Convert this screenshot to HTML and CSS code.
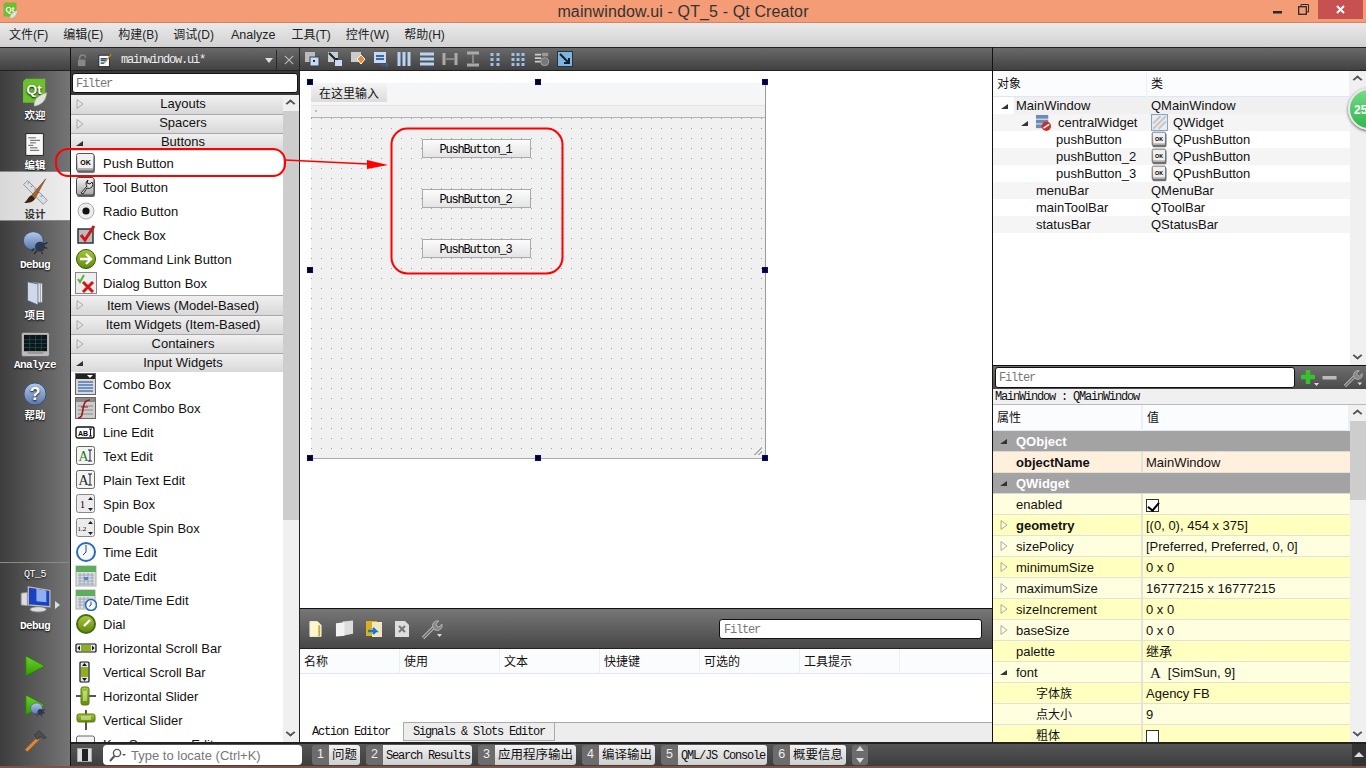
FILE: index.html
```html
<!DOCTYPE html>
<html lang="zh-CN">
<head>
  <meta charset="UTF-8" />
  <title>mainwindow.ui - QT_5 - Qt Creator</title>
  <link rel="stylesheet" href="styles.css">
</head>
<body>
  <!-- shared icons -->
  <svg class="defs" aria-hidden="true">
    <defs>
      <linearGradient id="gBtn" x1="0" y1="0" x2="0" y2="1"><stop offset="0" stop-color="#f4f4f4"/><stop offset="1" stop-color="#a8a8a8"/></linearGradient>
      <linearGradient id="gGreen" x1="0" y1="0" x2="0" y2="1"><stop offset="0" stop-color="#a4c93a"/><stop offset="1" stop-color="#5f8a0c"/></linearGradient>
      <linearGradient id="gBlue" x1="0" y1="0" x2="0" y2="1"><stop offset="0" stop-color="#b4c8e8"/><stop offset="1" stop-color="#5a78ac"/></linearGradient>
      <linearGradient id="gPlay" x1="0" y1="0" x2="0" y2="1"><stop offset="0" stop-color="#6fd02a"/><stop offset="1" stop-color="#2f9a08"/></linearGradient>

      <!-- widget box -->
      <symbol id="i-ok" viewBox="0 0 22 22"><rect x="2" y="3" width="18" height="18" rx="2" fill="#777"/><rect x="1.500" y="1.500" width="17.500" height="17.500" rx="2" fill="url(#gBtn)" stroke="#555"/><rect x="3" y="3" width="15" height="13" rx="1" fill="#f0f0f0"/><text x="10.500" y="12.500" font-size="7" font-weight="700" text-anchor="middle" font-family="Liberation Sans">OK</text></symbol>
      <symbol id="i-tool" viewBox="0 0 22 22"><rect x="2" y="3" width="18" height="18" rx="2" fill="#666"/><rect x="1.500" y="1.500" width="17.500" height="17.500" rx="2" fill="url(#gBtn)" stroke="#444"/><path d="M6 17l6-7a4 4 0 0 1 1-6l-1 3 3 1 2-2a4 4 0 0 1-5 6l-4 6z" fill="#ddd" stroke="#222"/></symbol>
      <symbol id="i-radio" viewBox="0 0 22 22"><circle cx="11" cy="11" r="8" fill="#ececec" stroke="#aaa"/><circle cx="11" cy="11" r="3.600" fill="#111"/></symbol>
      <symbol id="i-check" viewBox="0 0 22 22"><rect x="3" y="5" width="15" height="14" fill="#bbb" stroke="#333" stroke-width="1.500"/><path d="M6 11l4 5 9-14" fill="none" stroke="#d4121c" stroke-width="3"/></symbol>
      <symbol id="i-link" viewBox="0 0 22 22"><circle cx="11" cy="11" r="9.500" fill="url(#gGreen)" stroke="#3c5200"/><path d="M5 11h10M11 6l5 5-5 5" fill="none" stroke="#fff" stroke-width="2.400"/></symbol>
      <symbol id="i-dialog" viewBox="0 0 22 22"><rect x=".5" y=".5" width="21" height="21" fill="#eee" stroke="#888"/><path d="M3 7l2 3 4-7" fill="none" stroke="#57b43a" stroke-width="2"/><path d="M8 10l10 10M18 10L8 20" stroke="#d01818" stroke-width="3"/></symbol>
      <symbol id="i-combo" viewBox="0 0 22 22"><rect x=".5" y=".5" width="20" height="21" fill="#d8d8d8" stroke="#666"/><rect x="1" y="1" width="19" height="5" fill="#222"/><path d="M12 2h6l-3 3z" fill="#fff"/><path d="M3 9h15M3 12h15M3 15h15M3 18h15" stroke="#6f8fc0" stroke-width="2"/></symbol>
      <symbol id="i-fontcombo" viewBox="0 0 22 22"><rect x=".5" y=".5" width="20" height="21" fill="#ccc" stroke="#666"/><rect x="1" y="1" width="19" height="4" fill="#888"/><path d="M3 9h15M3 13h15M3 17h15" stroke="#aaa" stroke-width="2"/><path d="M3 21c4 0 4-3 5-9s2-9 7-9" fill="none" stroke="#a01818" stroke-width="1.600"/><path d="M6 10h7" stroke="#a01818"/></symbol>
      <symbol id="i-line" viewBox="0 0 22 22"><rect x="1" y="6" width="18" height="11" rx="2" fill="#fff" stroke="#111" stroke-width="1.400"/><text x="3" y="14.500" font-size="7" font-weight="700" font-family="Liberation Sans">AB</text><path d="M15.500 8v7M14 8h3M14 15h3" stroke="#111"/></symbol>
      <symbol id="i-text" viewBox="0 0 22 22"><rect x="1.500" y="1.500" width="18" height="18" rx="2" fill="#f4f4f4" stroke="#666"/><text x="3.500" y="15.500" font-size="14" fill="#1c7a1c" font-family="Liberation Serif">A</text><path d="M15 5v11M13 5h4M13 16h4" stroke="#222"/></symbol>
      <symbol id="i-plain" viewBox="0 0 22 22"><rect x="1.500" y="1.500" width="18" height="18" rx="2" fill="#f4f4f4" stroke="#666"/><text x="3.500" y="15.500" font-size="14" fill="#222" font-family="Liberation Serif">A</text><path d="M15 5v11M13 5h4M13 16h4" stroke="#222"/></symbol>
      <symbol id="i-spin" viewBox="0 0 22 22"><rect x="1.500" y="1.500" width="18" height="18" rx="2" fill="#ececec" stroke="#888"/><text x="5" y="15" font-size="10" font-family="Liberation Serif">1</text><path d="M13 7l2.500-3L18 7zM13 15l2.500 3 2.500-3z" fill="#222"/></symbol>
      <symbol id="i-dspin" viewBox="0 0 22 22"><rect x="1.500" y="1.500" width="18" height="18" rx="2" fill="#ececec" stroke="#888"/><text x="2.500" y="14" font-size="7" font-family="Liberation Serif">1.2</text><path d="M13 7l2.500-3L18 7zM13 15l2.500 3 2.500-3z" fill="#222"/></symbol>
      <symbol id="i-clock" viewBox="0 0 22 22"><circle cx="11" cy="11" r="9" fill="#f4f8fc" stroke="#2a6db4" stroke-width="2"/><path d="M11 4v7l-3 3" fill="none" stroke="#444"/></symbol>
      <symbol id="i-date" viewBox="0 0 22 22"><rect x="1" y="1" width="20" height="20" fill="#ddd" stroke="#aaa"/><rect x="1" y="1" width="20" height="6" fill="#5cae5c"/><path d="M3 10h16M3 13h16M3 16h16M3 19h16M5 8v12M9 8v12M13 8v12M17 8v12" stroke="#9aa8c0"/><rect x="9" y="12" width="4" height="3" fill="#5a80d0"/></symbol>
      <symbol id="i-datetime" viewBox="0 0 22 22"><rect x="1" y="1" width="19" height="19" fill="#ddd" stroke="#aaa"/><rect x="1" y="1" width="19" height="6" fill="#5cae5c"/><path d="M3 10h15M3 13h15M3 16h15M5 8v11M9 8v11M13 8v11" stroke="#9aa8c0"/><circle cx="16" cy="16" r="5.500" fill="#f4f8fc" stroke="#2a6db4" stroke-width="1.600"/><path d="M16 12.500V16l-2 1.500" fill="none" stroke="#444"/></symbol>
      <symbol id="i-dial" viewBox="0 0 22 22"><circle cx="11" cy="11" r="10" fill="#4e6812"/><circle cx="11" cy="11" r="8" fill="url(#gGreen)"/><path d="M9 13l6-6" stroke="#fff" stroke-width="2.400"/></symbol>
      <symbol id="i-hscroll" viewBox="0 0 22 22"><rect x="1" y="7" width="20" height="8" rx="1" fill="#e8e8e8" stroke="#111" stroke-width="1.200"/><rect x="6" y="8" width="10" height="6" fill="#8bb01c"/><path d="M2.500 11L5 8.500v5zM19.500 11L17 8.500v5z" fill="#111"/></symbol>
      <symbol id="i-vscroll" viewBox="0 0 22 22"><rect x="5" y="1" width="9" height="20" rx="1" fill="#e8e8e8" stroke="#111" stroke-width="1.200"/><rect x="6" y="6" width="7" height="10" fill="#8bb01c"/><path d="M9.500 2L7 5h5zM9.500 20L7 17h5z" fill="#111"/></symbol>
      <symbol id="i-hslider" viewBox="0 0 22 22"><path d="M1 11h20" stroke="#555" stroke-width="2"/><rect x="6" y="2" width="8" height="18" rx="2" fill="url(#gGreen)" stroke="#5a7a10"/><path d="M9 6v10M11 6v10" stroke="#eef6c0"/></symbol>
      <symbol id="i-vslider" viewBox="0 0 22 22"><path d="M11 1v20" stroke="#555" stroke-width="2"/><rect x="2" y="5" width="18" height="8" rx="2" fill="url(#gGreen)" stroke="#5a7a10"/><path d="M6 8h10M6 10h10" stroke="#eef6c0"/></symbol>
      <symbol id="i-key" viewBox="0 0 22 22"><rect x="1.500" y="3" width="18" height="16" rx="2" fill="#f4f4f4" stroke="#666"/></symbol>

      <!-- mode bar -->
      <symbol id="m-qt" viewBox="0 0 30 34"><path d="M4 1h23v24l-4 4H1V4z" fill="#6cc02c"/><text x="14" y="19" font-size="16" font-weight="700" fill="#fff" text-anchor="middle" font-family="Liberation Sans">Qt</text><path d="M14 33c-1-8 5-13 15-16-1 9-6 15-15 16z" fill="#dfe4dc" stroke="#8a948a" stroke-width=".6"/></symbol>
      <symbol id="m-edit" viewBox="0 0 24 28"><rect x="1" y="1" width="21" height="26" fill="#f8f8f8" stroke="#111"/><path d="M4 6h9M6 9h12M6 12h7M4 15h6M6 18h9M6 21h11" stroke="#444"/></symbol>
      <symbol id="m-design" viewBox="0 0 34 34"><path d="M3 8l5-5 24 24-5 5z" fill="#d8dde0" stroke="#889"/><path d="M10 5l-2 2M14 9l-2 2M18 13l-2 2M22 17l-2 2M26 21l-2 2" stroke="#667"/><path d="M30 1L13 21l4 4z" fill="#a86428" stroke="#5a3210" stroke-width=".6"/><path d="M13 21c-4 1-4 5-9 9 5 1 12-1 13-5z" fill="#3a2410"/></symbol>
      <symbol id="m-bug" viewBox="0 0 32 30"><ellipse cx="14" cy="13" rx="12" ry="11" fill="url(#gBlue)" stroke="#344a70"/><ellipse cx="22" cy="20" rx="6" ry="6" fill="#2c3850"/><path d="M18 25l-3 4M24 26l1 3M27 21l4 1M27 17l4-2M15 22l-3 3" stroke="#222" stroke-width="1.300"/></symbol>
      <symbol id="m-project" viewBox="0 0 24 34"><path d="M10 3l12 1v26l-12-2z" fill="#e4e8f0" stroke="#666"/><path d="M7 3l12 1v26L7 28z" fill="#f2f4f8" stroke="#777"/><path d="M2 2l14 3v28L2 27z" fill="#d0d8ea" stroke="#4a5a80"/></symbol>
      <symbol id="m-analyze" viewBox="0 0 30 26"><rect x=".5" y=".5" width="29" height="25" rx="2" fill="#bbb" stroke="#666"/><rect x="3" y="3" width="24" height="17" fill="#101414"/><path d="M3 8h24M3 12h24M3 16h24M9 3v17M15 3v17M21 3v17" stroke="#1e5866" stroke-width=".7"/><path d="M5 20l3 3h14l3-3" fill="#999"/></symbol>
      <symbol id="m-help" viewBox="0 0 26 26"><circle cx="13" cy="13" r="12" fill="url(#gBlue)" stroke="#344a70"/><text x="13" y="20" font-size="19" fill="#fff" text-anchor="middle" font-family="Liberation Sans">?</text></symbol>
      <symbol id="m-monitor" viewBox="0 0 34 30"><path d="M1 8l7-1v15L1 21z" fill="#ddd" stroke="#888"/><path d="M9 1l24 4v18l-24-2z" fill="#1842c0" stroke="#bbb" stroke-width="1.400"/><path d="M18 3l11 2v13l-11-1z" fill="#8fb0f0"/><ellipse cx="20" cy="26" rx="9" ry="3" fill="#ddd" stroke="#888"/></symbol>
      <symbol id="m-play" viewBox="0 0 24 24"><path d="M2 1l21 11L2 23z" fill="url(#gPlay)" stroke="#2a7a08"/></symbol>
      <symbol id="m-hammer" viewBox="0 0 28 28"><path d="M1 25l15-15 3 3L4 28z" fill="#d88a3c" stroke="#7a4414" stroke-width=".6"/><path d="M13 7l5-5 9 8-2 2-5-3-4 4z" fill="#4c4c54" stroke="#222" stroke-width=".6"/></symbol>

      <!-- small tree and tool icons -->
      <symbol id="t-open" viewBox="0 0 10 12"><path d="M2 1.500L8 6 2 10.500z" fill="none" stroke="#aaa"/></symbol>
      <symbol id="t-down" viewBox="0 0 10 12"><path d="M1 9l7-5v5z" fill="#333"/></symbol>
      <symbol id="t-hatch" viewBox="0 0 16 16"><rect x=".5" y=".5" width="15" height="15" fill="#eee" stroke="#7ea4d0"/><path d="M2 9l7-7M2 14L14 2M7 14l7-7" stroke="#c8c8c8" stroke-width="2"/></symbol>
      <symbol id="t-central" viewBox="0 0 18 18"><rect x="1" y="1" width="13" height="4" fill="#6c8cb8"/><rect x="1" y="6" width="13" height="4" fill="#6c8cb8"/><rect x="1" y="11" width="7" height="4" fill="#6c8cb8"/><circle cx="12" cy="13" r="5" fill="#c83030"/><path d="M9 15l6-4" stroke="#fff" stroke-width="1.500"/></symbol>
      <symbol id="t-wrench" viewBox="0 0 22 22"><path d="M2 20L13 9" stroke="#bbb" stroke-width="3.400"/><path d="M2 20L13 9" stroke="#666" stroke-width="1.400"/><path d="M12 10a5 5 0 0 1 6-7l-3 3 1 2 2 1 3-3a5 5 0 0 1-7 6z" fill="#888" stroke="#bbb" stroke-width=".8"/><path d="M16 16h5l-2.500 3z" fill="#ddd"/></symbol>
      <symbol id="t-doc" viewBox="0 0 14 18"><path d="M1 1h8l4 4v12H1z" fill="#fdf6c8" stroke="#eee"/><path d="M11 5v12" stroke="#c8a840" stroke-width="2"/></symbol>
      <symbol id="t-docs" viewBox="0 0 20 18"><path d="M8 1l11-1v14l-11 2z" fill="#ddd"/><path d="M1 3l9-1v14l-9 1z" fill="#f2f2f2"/></symbol>
      <symbol id="t-paste" viewBox="0 0 18 20"><rect x="1" y="2" width="11" height="15" fill="#d8b020"/><rect x="7" y="3" width="10" height="15" fill="#f0e8c0"/><path d="M3 12h8l-3-3M11 12l-3 3" stroke="#1878d0" stroke-width="2.400" fill="none"/></symbol>
      <symbol id="t-del" viewBox="0 0 16 18"><path d="M1 1h10l4 4v12H1z" fill="#ddd"/><path d="M5 6l6 6M11 6l-6 6" stroke="#777" stroke-width="2"/></symbol>
    </defs>
  </svg>

  <div class="title-bar">
    <svg class="app-icon"><use href="#m-qt"/></svg>
    <span class="window-title">mainwindow.ui - QT_5 - Qt Creator</span>
    <div class="win-buttons">
      <svg class="win-min" viewBox="0 0 9 3"><rect width="9" height="2.500" fill="#2a2a2a"/></svg>
      <svg class="win-restore" viewBox="0 0 11 11"><path d="M3 2V.5h7.500V8H9" fill="none" stroke="#2a2a2a"/><rect x=".7" y="2.700" width="7.600" height="7.600" fill="none" stroke="#2a2a2a" stroke-width="1.300"/></svg>
      <div class="win-close"><svg viewBox="0 0 9 9"><path d="M1 1l7 7M8 1L1 8" stroke="#fff" stroke-width="2"/></svg></div>
    </div>
  </div>

  <nav class="menu-bar">
    <span>文件(F)</span><span>编辑(E)</span><span>构建(B)</span><span>调试(D)</span><span class="menu-latin">Analyze</span><span>工具(T)</span><span>控件(W)</span><span>帮助(H)</span>
  </nav>

  <div class="workspace">
    <!-- left mode bar -->
    <aside class="mode-bar">
      <div class="dark-strip"></div>
      <div class="mode"><svg class="m-qt"><use href="#m-qt"/></svg><span>欢迎</span></div>
      <div class="mode"><svg class="m-edit"><use href="#m-edit"/></svg><span>编辑</span></div>
      <div class="mode active"><svg class="m-design"><use href="#m-design"/></svg><span>设计</span></div>
      <div class="mode"><svg class="m-bug"><use href="#m-bug"/></svg><span class="latin">Debug</span></div>
      <div class="mode"><svg class="m-project"><use href="#m-project"/></svg><span>项目</span></div>
      <div class="mode"><svg class="m-analyze"><use href="#m-analyze"/></svg><span class="latin">Analyze</span></div>
      <div class="mode"><svg class="m-help"><use href="#m-help"/></svg><span>帮助</span></div>
      <div class="mode-spacer"></div>
      <div class="kit">
        <small>QT_5</small>
        <svg class="m-monitor"><use href="#m-monitor"/></svg>
        <b class="kit-arrow"></b>
        <span class="latin">Debug</span>
      </div>
      <svg class="run"><use href="#m-play"/></svg>
      <div class="run-debug"><svg class="run"><use href="#m-play"/></svg><svg class="run-bug"><use href="#m-bug"/></svg></div>
      <svg class="hammer"><use href="#m-hammer"/></svg>
    </aside>

    <div class="work-area">
      <div class="main">
        <!-- widget box -->
        <section class="left-col">
          <div class="dark-strip doc-head">
            <svg class="lock" viewBox="0 0 14 14"><path d="M3 6V4a3 3 0 0 1 6 0" fill="none" stroke="#888" stroke-width="1.500"/><rect x="1" y="6" width="8" height="7" fill="#888"/></svg>
            <svg class="doc-icon" viewBox="0 0 16 16"><rect x="1" y="2" width="12" height="13" fill="#fff" stroke="#222"/><path d="M3 6h7M3 8h7" stroke="#3050a0" stroke-width="1.500"/><path d="M3 11h4" stroke="#3a8a3a" stroke-width="2"/><path d="M7 11l8-10" stroke="#c09020" stroke-width="1.500"/></svg>
            <span class="doc-name">mainwindow.ui*</span>
            <b class="drop"></b>
            <i class="doc-sep"></i>
            <svg class="doc-close" viewBox="0 0 12 12"><path d="M1 1l10 10M11 1L1 11" stroke="#bbb" stroke-width="1.400"/></svg>
          </div>
          <div class="filter-row"><div class="filter">Filter</div></div>
          <div class="box-body">
            <div class="box-list">
              <div class="cat"><svg class="tri"><use href="#t-open"/></svg>Layouts</div>
              <div class="cat"><svg class="tri"><use href="#t-open"/></svg>Spacers</div>
              <div class="cat tight"><svg class="tri"><use href="#t-down"/></svg>Buttons</div>
              <div class="item"><svg><use href="#i-ok"/></svg>Push Button</div>
              <div class="item"><svg><use href="#i-tool"/></svg>Tool Button</div>
              <div class="item"><svg><use href="#i-radio"/></svg>Radio Button</div>
              <div class="item"><svg><use href="#i-check"/></svg>Check Box</div>
              <div class="item"><svg><use href="#i-link"/></svg>Command Link Button</div>
              <div class="item"><svg><use href="#i-dialog"/></svg>Dialog Button Box</div>
              <div class="cat loose"><svg class="tri"><use href="#t-open"/></svg>Item Views (Model-Based)</div>
              <div class="cat low"><svg class="tri"><use href="#t-open"/></svg>Item Widgets (Item-Based)</div>
              <div class="cat low"><svg class="tri"><use href="#t-open"/></svg>Containers</div>
              <div class="cat low"><svg class="tri"><use href="#t-down"/></svg>Input Widgets</div>
              <div class="item"><svg><use href="#i-combo"/></svg>Combo Box</div>
              <div class="item"><svg><use href="#i-fontcombo"/></svg>Font Combo Box</div>
              <div class="item"><svg><use href="#i-line"/></svg>Line Edit</div>
              <div class="item"><svg><use href="#i-text"/></svg>Text Edit</div>
              <div class="item"><svg><use href="#i-plain"/></svg>Plain Text Edit</div>
              <div class="item"><svg><use href="#i-spin"/></svg>Spin Box</div>
              <div class="item"><svg><use href="#i-dspin"/></svg>Double Spin Box</div>
              <div class="item"><svg><use href="#i-clock"/></svg>Time Edit</div>
              <div class="item"><svg><use href="#i-date"/></svg>Date Edit</div>
              <div class="item"><svg><use href="#i-datetime"/></svg>Date/Time Edit</div>
              <div class="item"><svg><use href="#i-dial"/></svg>Dial</div>
              <div class="item"><svg><use href="#i-hscroll"/></svg>Horizontal Scroll Bar</div>
              <div class="item"><svg><use href="#i-vscroll"/></svg>Vertical Scroll Bar</div>
              <div class="item"><svg><use href="#i-hslider"/></svg>Horizontal Slider</div>
              <div class="item"><svg><use href="#i-vslider"/></svg>Vertical Slider</div>
              <div class="item"><svg><use href="#i-key"/></svg>Key Sequence Edit</div>
            </div>
            <div class="scroll box-scroll"><em class="up"></em><div class="thumb"></div><em class="down"></em></div>
          </div>
        </section>

        <!-- form editor + action editor -->
        <section class="center-col">
          <div class="dark-strip form-tools">
            <svg viewBox="0 0 16 16"><rect x="1" y="1" width="10" height="10" fill="#bbb"/><rect x="6" y="6" width="9" height="9" fill="#c8daf4" stroke="#345"/><rect x="9" y="9" width="2" height="2" fill="#234"/></svg>
            <svg viewBox="0 0 16 16"><rect x="1" y="1" width="10" height="10" fill="#ccc"/><path d="M2 2l8 8M7 10h3V7" stroke="#123" stroke-width="2" fill="none"/><rect x="8" y="9" width="7" height="6" fill="#c8daf4"/></svg>
            <svg viewBox="0 0 16 16"><rect x="1" y="1" width="10" height="10" fill="#ccc"/><path d="M7 8l4-4 4 4-4 5z" fill="#f08a30" stroke="#fff"/></svg>
            <svg viewBox="0 0 16 16"><rect x="1" y="1" width="12" height="11" fill="#c8daf4"/><path d="M3 5h8M3 8h8" stroke="#3668b0" stroke-width="2"/><path d="M8 14h7M13 12l2 2-2 2" stroke="#3668b0" fill="none"/></svg>
            <svg viewBox="0 0 16 16"><path d="M3 1v14M8 1v14M13 1v14" stroke="#b8d4f4" stroke-width="3"/></svg>
            <svg viewBox="0 0 16 16"><path d="M1 3h14M1 8h14M1 13h14" stroke="#b8d4f4" stroke-width="3"/></svg>
            <svg viewBox="0 0 16 16"><path d="M2 2v12M14 2v12" stroke="#aaa" stroke-width="3"/><path d="M4 8h8" stroke="#888" stroke-width="2"/></svg>
            <svg viewBox="0 0 16 16"><path d="M2 2h12M2 14h12" stroke="#aaa" stroke-width="3"/><path d="M8 4v8" stroke="#888" stroke-width="2"/></svg>
            <svg viewBox="0 0 16 16"><path d="M4 2v3M10 2v3M4 7v3M10 7v3M4 12v3M10 12v3" stroke="#9cc0e8" stroke-width="3"/></svg>
            <svg viewBox="0 0 16 16"><path d="M2 2v3M7 2v3M12 2v3M2 7v3M7 7v3M12 7v3M2 12v3M7 12v3M12 12v3" stroke="#9cc0e8" stroke-width="3"/></svg>
            <svg viewBox="0 0 18 16"><path d="M1 3h7M1 7h7M1 11h7" stroke="#ccc" stroke-width="2"/><path d="M9 1h7v4H9z" fill="#999"/><circle cx="12" cy="11" r="4.500" fill="#777" stroke="#aaa"/></svg>
            <svg viewBox="0 0 16 16"><rect x=".5" y=".5" width="15" height="15" fill="#7fb4dc" stroke="#234"/><path d="M3 3l9 9M7 12h5V7" stroke="#123" stroke-width="2" fill="none"/></svg>
          </div>

          <div class="canvas">
            <div class="form">
              <div class="form-menu"><span class="type-here">在这里输入</span></div>
              <div class="form-toolbar"><i></i></div>
              <div class="form-body">
                <div class="push">PushButton_1</div>
                <div class="push">PushButton_2</div>
                <div class="push">PushButton_3</div>
              </div>
              <i class="grip"></i>
              <i class="handle h-tl"></i><i class="handle h-tm"></i><i class="handle h-tr"></i>
              <i class="handle h-ml"></i><i class="handle h-mr"></i>
              <i class="handle h-bl"></i><i class="handle h-bm"></i><i class="handle h-br"></i>
            </div>
          </div>

          <div class="action-editor">
            <div class="action-tools">
              <svg class="a-doc"><use href="#t-doc"/></svg>
              <svg class="a-docs"><use href="#t-docs"/></svg>
              <svg class="a-paste"><use href="#t-paste"/></svg>
              <svg class="a-del"><use href="#t-del"/></svg>
              <svg class="a-wrench"><use href="#t-wrench"/></svg>
              <div class="filter action-filter">Filter</div>
            </div>
            <div class="action-head">
              <span>名称</span><span>使用</span><span>文本</span><span>快捷键</span><span>可选的</span><span>工具提示</span>
            </div>
            <div class="action-table"></div>
            <div class="tabs">
              <span class="tab current">Action Editor</span>
              <span class="tab">Signals &amp; Slots Editor</span>
            </div>
          </div>
        </section>

        <!-- object + property inspector -->
        <section class="right-col">
          <div class="dark-strip"></div>
          <div class="object-panel">
            <div class="object-table">
              <div class="tree-head"><span>对象</span><span>类</span></div>
              <div class="obj first"><span class="lvl0"><svg class="tri"><use href="#t-down"/></svg>MainWindow</span><span>QMainWindow</span></div>
              <div class="obj alt"><span class="lvl1"><svg class="tri"><use href="#t-down"/></svg><svg class="ico"><use href="#t-central"/></svg>centralWidget</span><span class="cls"><svg class="ico"><use href="#t-hatch"/></svg>QWidget</span></div>
              <div class="obj"><span class="lvl2">pushButton</span><span class="cls"><svg class="ico"><use href="#i-ok"/></svg>QPushButton</span></div>
              <div class="obj alt"><span class="lvl2">pushButton_2</span><span class="cls"><svg class="ico"><use href="#i-ok"/></svg>QPushButton</span></div>
              <div class="obj"><span class="lvl2">pushButton_3</span><span class="cls"><svg class="ico"><use href="#i-ok"/></svg>QPushButton</span></div>
              <div class="obj alt"><span class="lvl1b">menuBar</span><span>QMenuBar</span></div>
              <div class="obj"><span class="lvl1b">mainToolBar</span><span>QToolBar</span></div>
              <div class="obj alt"><span class="lvl1b">statusBar</span><span>QStatusBar</span></div>
            </div>
            <div class="scroll obj-scroll"><em class="up"></em><em class="down"></em></div>
            <div class="ball">25</div>
          </div>

          <div class="prop-tools">
            <div class="filter prop-filter">Filter</div>
            <svg class="plus" viewBox="0 0 20 20"><path d="M1 9h14M8 2v14" stroke="#38c030" stroke-width="4.500"/><path d="M14 15h5l-2.500 3z" fill="#ddd"/></svg>
            <svg class="minus" viewBox="0 0 14 6"><rect y="1" width="14" height="3.500" fill="#bbb"/></svg>
            <svg class="prop-wrench"><use href="#t-wrench"/></svg>
          </div>
          <div class="prop-caption">MainWindow : QMainWindow</div>
          <div class="prop-panel">
            <div class="prop-table">
              <div class="prop-head"><span>属性</span><span>值</span></div>
              <div class="group"><svg class="tri"><use href="#t-down"/></svg>QObject</div>
              <div class="prop own"><span class="bold">objectName</span><span>MainWindow</span></div>
              <div class="group"><svg class="tri"><use href="#t-down"/></svg>QWidget</div>
              <div class="prop pale"><span>enabled</span><span><i class="box checked"></i></span></div>
              <div class="prop"><span class="bold"><svg class="tri"><use href="#t-open"/></svg>geometry</span><span>[(0, 0), 454 x 375]</span></div>
              <div class="prop pale"><span><svg class="tri"><use href="#t-open"/></svg>sizePolicy</span><span>[Preferred, Preferred, 0, 0]</span></div>
              <div class="prop"><span><svg class="tri"><use href="#t-open"/></svg>minimumSize</span><span>0 x 0</span></div>
              <div class="prop pale"><span><svg class="tri"><use href="#t-open"/></svg>maximumSize</span><span>16777215 x 16777215</span></div>
              <div class="prop"><span><svg class="tri"><use href="#t-open"/></svg>sizeIncrement</span><span>0 x 0</span></div>
              <div class="prop pale"><span><svg class="tri"><use href="#t-open"/></svg>baseSize</span><span>0 x 0</span></div>
              <div class="prop"><span>palette</span><span>继承</span></div>
              <div class="prop pale"><span><svg class="tri"><use href="#t-down"/></svg>font</span><span><b class="font-a">A</b>[SimSun, 9]</span></div>
              <div class="prop sub"><span>字体族</span><span>Agency FB</span></div>
              <div class="prop sub pale"><span>点大小</span><span>9</span></div>
              <div class="prop sub"><span>粗体</span><span><i class="box"></i></span></div>
            </div>
            <div class="scroll prop-scroll"><em class="up"></em><div class="thumb"></div><em class="down"></em></div>
          </div>
        </section>
      </div>

      <footer class="status-bar">
        <div class="side-toggle"><i></i></div>
        <div class="locator">
          <svg viewBox="0 0 18 14"><circle cx="9" cy="5" r="3.600" fill="none" stroke="#555" stroke-width="1.400"/><path d="M6.500 8L2 13" stroke="#555" stroke-width="2"/><path d="M14 6h4l-2 2z" fill="#555"/></svg>
          <span>Type to locate (Ctrl+K)</span>
        </div>
        <div class="pane"><b>1</b><span>问题</span></div>
        <div class="pane"><b>2</b><span class="mono">Search Results</span></div>
        <div class="pane"><b>3</b><span>应用程序输出</span></div>
        <div class="pane"><b>4</b><span>编译输出</span></div>
        <div class="pane"><b>5</b><span class="mono">QML/JS Console</span></div>
        <div class="pane"><b>6</b><span>概要信息</span></div>
        <div class="pane-more"><em class="up"></em><em class="down"></em></div>
        <div class="more-end"><em class="up"></em></div>
      </footer>
    </div>
  </div>
  <div class="desktop-edge"></div>

  <!-- red hand-drawn markup on top of the screenshot -->
  <svg class="markup" viewBox="0 0 1366 768">
    <rect x="56" y="149" width="229" height="27" rx="12" fill="none" stroke="#f00" stroke-width="2"/>
    <rect x="391.500" y="128.500" width="171" height="145" rx="16" fill="none" stroke="#f00" stroke-width="2"/>
    <path d="M285 160l83 4" stroke="#f00" stroke-width="1.600"/>
    <path d="M367 160l21 5-21 4z" fill="#f00"/>
  </svg>
</body>
</html>
```

FILE: styles.css
```css
/* ------------------------------
   BASE
------------------------------- */
* {
  margin: 0;
  padding: 0;
  box-sizing: border-box;
}
body {
  width: 1366px;
  height: 768px;
  overflow: hidden;
  position: relative;
  display: flex;
  flex-direction: column;
  font-family: "Liberation Sans", "Noto Sans CJK SC", sans-serif;
  font-size: 13px;
  color: #111;
  background: #444;
}
svg { display: block; flex: none; }
.defs { position: absolute; width: 0; height: 0; }

/* the SimSun-looking latin text used all over the designer */
.mono, .doc-name, .filter, .tab, .push, .prop-caption {
  font-family: "Liberation Mono", "Noto Sans CJK SC", monospace;
  font-size: 12px;
  letter-spacing: -1.2px;
}

/* ------------------------------
   TITLE + MENU
------------------------------- */
.title-bar {
  height: 23px;
  flex: none;
  position: relative;
  display: flex;
  justify-content: center;
  align-items: center;
  padding-top: 1px;
  background: #f49c76;
  border-bottom: 1px solid #cf8469;
}
.app-icon { position: absolute; left: 3px; top: 2px; width: 15px; height: 17px; }
.window-title { font-size: 16px; letter-spacing: 0.12px; color: #333; }
.win-buttons {
  position: absolute;
  right: 3px;
  top: 0;
  display: flex;
  align-items: flex-start;
}
.win-min { width: 9px; height: 3px; margin: 11px 16px 0 0; }
.win-restore { width: 11px; height: 11px; margin: 4px 9px 0 0; }
.win-close {
  width: 45px;
  height: 19px;
  background: #c75050;
  display: flex;
  align-items: center;
  justify-content: center;
}
.win-close svg { width: 9px; height: 9px; }

.menu-bar {
  height: 24px;
  flex: none;
  display: flex;
  gap: 15px;
  align-items: center;
  padding-left: 9px;
  font-size: 12px;
  color: #222;
  background: linear-gradient(#e9e9e9, #d2d2d2);
}
.menu-bar span { line-height: 16px; white-space: nowrap; }
.menu-bar .menu-latin { font-size: 12.500px; margin: 0 1px 0 2px; }

/* ------------------------------
   LAYOUT
------------------------------- */
.workspace {
  flex: 1;
  min-height: 0;
  display: flex;
}
.work-area {
  flex: 1;
  min-width: 0;
  display: flex;
  flex-direction: column;
}
.main {
  flex: 1;
  min-height: 0;
  display: grid;
  grid-template-columns: 229px 692px 374px;
}
.dark-strip {
  height: 24px;
  flex: none;
  background: linear-gradient(#6a6a6a, #414141);
  border-top: 1px solid #222;
  border-bottom: 1px solid #222;
}

/* mode bar */
.mode-bar {
  width: 71px;
  flex: none;
  display: flex;
  flex-direction: column;
  align-items: center;
  padding-bottom: 14px;
  background: linear-gradient(90deg, #3d3d3d, #757575);
  border-right: 1px solid #111;
  overflow: hidden;
}
.mode-bar .dark-strip { width: 100%; }
.mode {
  width: 100%;
  height: 50px;
  flex: none;
  display: flex;
  flex-direction: column;
  align-items: center;
  justify-content: flex-end;
  gap: 3px;
  color: #fff;
  font-size: 10.500px;
  font-weight: 700;
  text-shadow: 0 1px 2px #000;
}
.mode span { line-height: 11px; }
.mode.active {
  background: linear-gradient(90deg, #d8d8d8, #eeeeee);
  color: #333;
  text-shadow: none;
  border-top: 1px solid #888;
  border-bottom: 1px solid #888;
}
.latin {
  font-family: "Liberation Mono", monospace;
  font-size: 11px;
  font-weight: 700;
  letter-spacing: -0.6px;
}
.m-qt { width: 26px; height: 29px; }
.m-edit { width: 20px; height: 25px; }
.m-design { width: 30px; height: 28px; }
.m-bug { width: 28px; height: 25px; margin-bottom: 2px; }
.m-project { width: 18px; height: 28px; }
.m-analyze { width: 29px; height: 25px; }
.m-help { width: 24px; height: 24px; margin-bottom: 1px; }
.mode-spacer {
  flex: 1;
  width: 100%;
  border-bottom: 1px solid #8a8a8a;
}
.kit {
  position: relative;
  width: 100%;
  height: 69px;
  flex: none;
  display: flex;
  flex-direction: column;
  align-items: center;
  color: #fff;
  text-shadow: 0 1px 2px #000;
  padding-top: 6px;
}
.kit small {
  font-family: "Liberation Mono", monospace;
  font-size: 10px;
  line-height: 11px;
  letter-spacing: -0.5px;
  margin-bottom: 6px;
}
.kit .latin { line-height: 16px; }
.m-monitor { width: 31px; height: 27px; margin-bottom: 5px; }
.kit-arrow {
  position: absolute;
  left: 55px;
  top: 38px;
  border: 4px solid transparent;
  border-left: 5px solid #ddd;
  border-right: 0;
}
.run { width: 22px; height: 22px; margin-top: 23px; }
.run-debug { position: relative; width: 22px; height: 24px; margin-top: 16px; }
.run-debug .run { margin: 0; height: 24px; }
.run-bug { position: absolute; left: 5px; top: 9px; width: 17px; height: 15px; }
.hammer { width: 25px; height: 23px; margin-top: 12px; }

/* widget box */
.left-col {
  display: flex;
  flex-direction: column;
  min-height: 0;
  background: #fff;
  border-right: 1px solid #222;
}
.doc-head {
  display: flex;
  align-items: center;
  padding-top: 2px;
  color: #eee;
}
.lock { width: 13px; height: 13px; margin-left: 6px; }
.doc-icon { width: 14px; height: 15px; margin-left: 8px; }
.doc-name { margin-left: 9px; white-space: nowrap; }
.drop {
  margin-left: 60px;
  border: 4px solid transparent;
  border-top: 5px solid #ddd;
  border-bottom: 0;
}
.doc-sep { width: 1px; height: 20px; margin-left: 3px; background: #2a2a2a; }
.doc-close { width: 10px; height: 10px; margin-left: 7px; }
.filter-row {
  height: 24px;
  flex: none;
  padding: 2px 1px 0 1px;
  background: #3a3a3a;
}
.filter {
  background: #fff;
  border: 1px solid #111;
  border-radius: 3px;
  height: 20px;
  padding-left: 3px;
  line-height: 20px;
  color: #777;
}
.box-body {
  flex: 1;
  min-height: 0;
  display: flex;
}
.box-list {
  flex: 1;
  min-width: 0;
  overflow: hidden;
}
.cat {
  position: relative;
  height: 19px;
  padding-left: 12px;
  text-align: center;
  line-height: 16px;
  color: #111;
  background: linear-gradient(#f0f0f0, #d8d8d8);
  border-top: 1px solid #a8a8a8;
}
.cat:first-child { border-top: 0; line-height: 18px; }
.cat.tight { height: 18px; }
.cat.loose { height: 20px; padding-top: 1px; line-height: 18px; }
.cat.low { line-height: 18px; }
.tri { width: 10px; height: 12px; }
.cat .tri { position: absolute; left: 4px; top: 3px; }
.item {
  height: 24px;
  display: flex;
  align-items: center;
  gap: 6px;
  padding-left: 4px;
  white-space: nowrap;
}
.item svg { width: 22px; height: 22px; }
.scroll {
  position: relative;
  flex: none;
  width: 16px;
  background: #f0f0f0;
}
.thumb { position: absolute; left: 0; right: 0; background: #cdcdcd; }
.up, .down {
  position: absolute;
  left: 4px;
  width: 7px;
  height: 7px;
  border-left: 2px solid #555;
  border-top: 2px solid #555;
  transform: scale(1, 0.8) rotate(45deg);
}
.up { top: 5px; }
.down { bottom: 6px; transform: scale(1, 0.8) rotate(225deg); }
.box-scroll .thumb { top: 16px; height: 409px; }

/* center */
.center-col {
  display: flex;
  flex-direction: column;
  min-height: 0;
  background: #fff;
}
.form-tools {
  display: flex;
  align-items: center;
  gap: 7px;
  padding-left: 4px;
}
.form-tools svg { width: 16px; height: 16px; }
.canvas {
  height: 537px;
  flex: none;
  padding: 12px 0 0 11px;
}
.form {
  position: relative;
  width: 455px;
  height: 376px;
  display: flex;
  flex-direction: column;
  background: #f0f0f0;
  border-right: 1px solid #999;
  border-bottom: 1px solid #aaa;
}
.form-menu {
  height: 23px;
  flex: none;
  background: #f5f6f8;
  border-bottom: 1px solid #e2e2e2;
}
.type-here {
  display: block;
  height: 19px;
  width: 76px;
  padding-left: 8px;
  line-height: 22px;
  font-size: 12px;
  background: linear-gradient(#f4f4f4, #dcdcdc);
}
.form-toolbar {
  height: 12px;
  flex: none;
  padding: 4px 0 0 4px;
  border-bottom: 1px solid #b4b4b4;
}
.form-toolbar i { display: block; width: 2px; height: 2px; background: #bbb; }
.form-body {
  flex: 1;
  display: flex;
  flex-direction: column;
  gap: 31px;
  padding: 21px 0 0 111px;
  /* designer grid: one dot every 10px */
  background-image:
    linear-gradient(90deg, #f0f0f0 9px, transparent 9px),
    linear-gradient(#a0a0a0 1px, #f0f0f0 1px);
  background-size: 10px 10px;
  background-position: -9px 0;
}
.push {
  width: 109px;
  height: 19px;
  border: 1px solid #aaa;
  background: linear-gradient(#fcfcfc, #e4e4e4);
  text-align: center;
  padding-right: 2px;
  line-height: 20px;
  color: #000;
}
.grip {
  position: absolute;
  right: 3px;
  bottom: 3px;
  width: 8px;
  height: 8px;
  background: linear-gradient(135deg, transparent 50%, #aaa 50%, #aaa 60%, transparent 60%, transparent 75%, #aaa 75%, #aaa 85%, transparent 85%);
}
.handle {
  position: absolute;
  width: 6px;
  height: 6px;
  background: #000;
  border: 1px solid #0000c0;
}
.h-tl { left: -4px; top: -4px; }
.h-tm { left: 224px; top: -4px; }
.h-tr { right: -3px; top: -4px; }
.h-ml { left: -4px; top: 184px; }
.h-mr { right: -3px; top: 184px; }
.h-bl { left: -4px; bottom: -3px; }
.h-bm { left: 224px; bottom: -3px; }
.h-br { right: -3px; bottom: -3px; }

.action-editor {
  flex: 1;
  min-height: 0;
  display: flex;
  flex-direction: column;
}
.action-tools {
  height: 41px;
  flex: none;
  display: flex;
  align-items: center;
  background: linear-gradient(#777, #474747);
  border-top: 1px solid #111;
  border-bottom: 1px solid #222;
}
.a-doc { width: 13px; height: 18px; margin-left: 9px; }
.a-docs { width: 19px; height: 18px; margin-left: 13px; }
.a-paste { width: 18px; height: 20px; margin-left: 11px; }
.a-del { width: 16px; height: 18px; margin-left: 11px; }
.a-wrench { width: 22px; height: 22px; margin-left: 11px; }
.action-filter { width: 263px; height: 20px; margin-left: auto; margin-right: 10px; padding-left: 4px; }
.action-head {
  height: 25px;
  flex: none;
  display: flex;
  background: #fbfcfe;
  border-bottom: 1px solid #e0e8f2;
  font-size: 12px;
}
.action-head span {
  width: 100px;
  padding-left: 4px;
  line-height: 26px;
  border-right: 1px solid #eaf0f6;
}
.action-table { height: 48px; flex: none; }
.tabs {
  flex: 1;
  display: flex;
  align-items: flex-start;
  background: #ededed;
  border-top: 1px solid #aaa;
}
.tab {
  height: 18px;
  padding-left: 9px;
  width: 152px;
  line-height: 19px;
  border: 1px solid #aaa;
  border-top: 0;
  white-space: nowrap;
}
.tab.current {
  background: #fff;
  height: 20px;
  width: 103px;
  padding-left: 12px;
  border: 0;
  margin-top: -1px;
  line-height: 20px;
}

/* right */
.right-col {
  display: flex;
  flex-direction: column;
  min-height: 0;
  min-width: 0;
  overflow: hidden;
  background: #fff;
  border-left: 1px solid #111;
}
.object-panel {
  position: relative;
  height: 294px;
  flex: none;
  display: flex;
}
.object-table { flex: 1; min-width: 0; padding-top: 1px; }
.tree-head, .prop-head {
  display: grid;
  background: #fbfcfe;
  border-bottom: 1px solid #dfe8f2;
  font-size: 12px;
}
.tree-head {
  height: 25px;
  grid-template-columns: 154px 1fr;
}
.tree-head span { padding-left: 4px; line-height: 25px; border-right: 1px solid #eaf0f6; }
.obj {
  display: grid;
  grid-template-columns: 154px 1fr;
  height: 17px;
  line-height: 17px;
}
.obj > span { display: flex; align-items: center; padding-left: 4px; white-space: nowrap; }
.obj.first { background: linear-gradient(90deg, #fff 21px, #f0f0f0 21px); }
.obj.alt { background: #f5f5f5; }
.obj > .lvl0 { padding-left: 7px; gap: 6px; }
.obj > .lvl1 { padding-left: 27px; gap: 5px; }
.lvl1 .ico { margin-right: 1px; }
.obj > .lvl2 { padding-left: 63px; }
.obj > .lvl1b { padding-left: 43px; }
.ico { width: 17px; height: 17px; }
.cls { gap: 5px; }
.obj-scroll { height: 100%; }
.ball {
  position: absolute;
  right: -24px;
  top: 17px;
  width: 42px;
  height: 42px;
  border-radius: 50%;
  padding-left: 4px;
  line-height: 40px;
  color: #fff;
  font-size: 12px;
  font-weight: 700;
  background: linear-gradient(#72dc86, #34b54e);
  border: 2px solid #e8e8e8;
  box-shadow: 0 1px 3px #555;
}

.prop-tools {
  height: 24px;
  flex: none;
  display: flex;
  align-items: center;
  background: linear-gradient(#6e6e6e, #4a4a4a);
  border-top: 1px solid #111;
}
.prop-filter { width: 300px; height: 21px; margin-left: 2px; }
.plus { width: 20px; height: 20px; margin-left: 5px; }
.minus { width: 15px; height: 6px; margin-left: 2px; }
.prop-wrench { width: 20px; height: 20px; margin-left: 6px; }
.prop-caption {
  height: 16px;
  flex: none;
  padding-left: 2px;
  line-height: 17px;
  background: #f0f0f0;
  border-bottom: 1px solid #bbb;
}
.prop-panel {
  flex: 1;
  min-height: 0;
  display: flex;
}
.prop-table { flex: 1; min-width: 0; overflow: hidden; }
.prop-head {
  height: 26px;
  grid-template-columns: 150px 1fr;
}
.prop-head span { padding-left: 4px; line-height: 27px; border-right: 2px solid #eaf0f6; }
.group {
  position: relative;
  height: 21px;
  line-height: 22px;
  padding-left: 23px;
  color: #fff;
  font-weight: 700;
  background: #a3a3a3;
  border-bottom: 1px solid #d8d8d8;
}
.group .tri { position: absolute; left: 6px; top: 4px; }
.prop {
  display: grid;
  grid-template-columns: 150px 1fr;
  height: 21px;
  line-height: 22px;
  background: #ffffbf;
  border-bottom: 1px solid #e2e2d8;
}
.prop.pale { background: #ffffdf; }
.prop.own { background: #ffefdd; }
.prop > span:first-child {
  position: relative;
  padding-left: 23px;
  border-right: 2px solid #e2e2d8;
}
.prop > span:last-child { padding-left: 3px; display: flex; align-items: center; }
.prop.sub > span:first-child { padding-left: 43px; font-size: 12px; }
.prop .tri { position: absolute; left: 6px; top: 4px; }
.bold { font-weight: 700; }
.box {
  width: 13px;
  height: 13px;
  background: #fff;
  border: 1px solid #333;
  position: relative;
}
.box.checked::after {
  content: "";
  position: absolute;
  left: 3px;
  top: 0;
  width: 5px;
  height: 9px;
  border-right: 2px solid #000;
  border-bottom: 2px solid #000;
  transform: rotate(40deg);
}
.font-a {
  font-family: "Liberation Serif", serif;
  font-weight: 400;
  font-size: 15px;
  margin: 0 7px 0 4px;
}
.prop-scroll .thumb { top: 16px; height: 79px; }

/* ------------------------------
   STATUS BAR
------------------------------- */
.status-bar {
  height: 24px;
  flex: none;
  display: flex;
  align-items: center;
  gap: 6px;
  padding-left: 6px;
  background: linear-gradient(#555, #3e3e3e);
  border-top: 2px solid #222;
}
.side-toggle {
  width: 15px;
  height: 14px;
  margin-right: 5px;
  background: #ddd;
  border: 1px solid #aaa;
  display: flex;
  justify-content: center;
}
.side-toggle i { width: 6px; background: #222; }
.locator {
  width: 199px;
  height: 20px;
  display: flex;
  align-items: center;
  gap: 5px;
  padding-left: 5px;
  margin-right: 4px;
  background: #fff;
  border-radius: 4px;
  color: #777;
}
.locator svg { width: 18px; height: 14px; }
.pane {
  height: 20px;
  display: flex;
  border-radius: 3px;
  overflow: hidden;
  font-size: 12.500px;
  flex: none;
}
.pane b {
  width: 17px;
  font-weight: 400;
  text-align: center;
  line-height: 19px;
  color: #eee;
  background: #6c6c6c;
}
.pane span {
  padding: 0 3px;
  line-height: 20px;
  background: linear-gradient(#f2f2f2, #cfcfcf);
}
.pane span.mono { line-height: 23px; padding-right: 2px; }
.pane-more {
  position: relative;
  width: 16px;
  height: 20px;
  background: #6c6c6c;
  border-radius: 3px;
}
.pane-more .up, .pane-more .down {
  width: 0;
  height: 0;
  left: 4px;
  border: 4px solid transparent;
  transform: none;
}
.pane-more .up { top: 1px; border-bottom: 5px solid #ddd; border-top: 0; }
.pane-more .down { bottom: 2px; border-top: 5px solid #ddd; border-bottom: 0; }
.more-end {
  position: relative;
  margin-left: auto;
  width: 14px;
  height: 22px;
  background: #333;
}
.more-end .up {
  width: 0;
  height: 0;
  left: 2px;
  top: 8px;
  border: 5px solid transparent;
  border-bottom: 5px solid #ddd;
  border-top: 0;
  transform: none;
}
.desktop-edge {
  height: 2px;
  flex: none;
  background: #7d5444;
}

/* annotation lies over the whole window */
.markup {
  position: absolute;
  left: 0;
  top: 0;
  width: 1366px;
  height: 768px;
  pointer-events: none;
}
```
